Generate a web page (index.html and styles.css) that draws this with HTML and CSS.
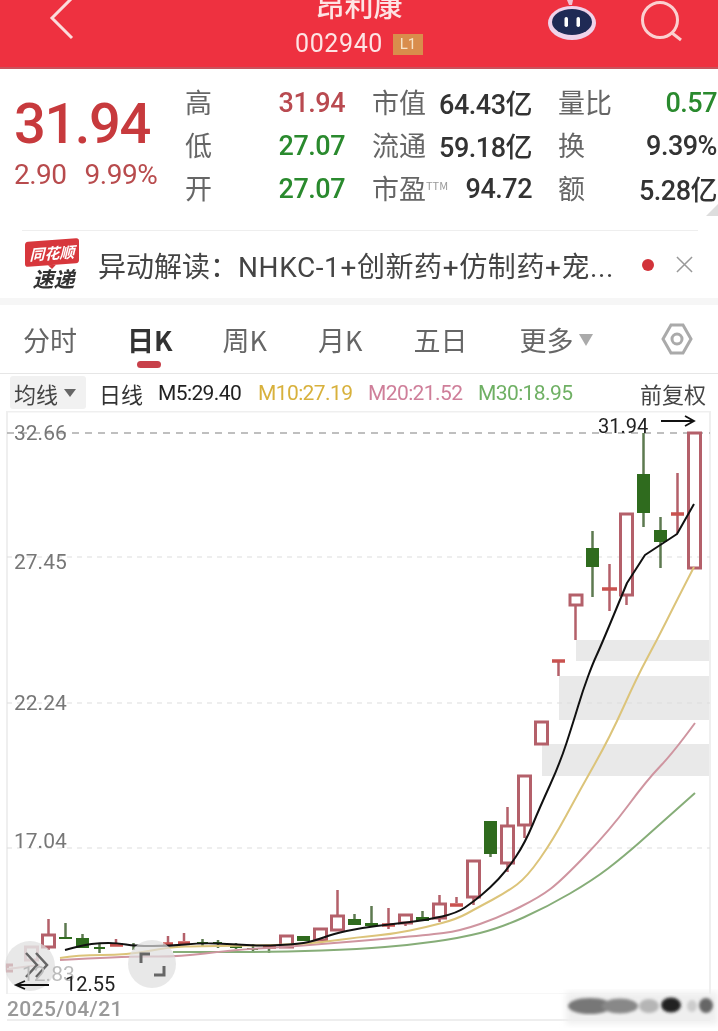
FILE: index.html
```html
<!DOCTYPE html>
<html lang="zh-CN">

<head>
    <meta charset="UTF-8">
    <meta name="viewport" content="width=device-width, initial-scale=1.0">
    <title>昂利康</title>

    <link rel="stylesheet" href="styles.css">
</head>

<body>
    <header class="top-bar">
        <svg class="back-icon" viewBox="0 0 30 50">
            <path d="M23 1 3 21l20 20"></path>
        </svg>
        <div class="stock-name">
            <div class="name">昂利康</div>
            <div class="code-row">
                <span class="code">002940</span>
                <span class="level">L1</span>
            </div>
        </div>
        <svg class="robot-icon" viewBox="0 0 50 42">
            <ellipse cx="25" cy="23" rx="24" ry="17" fill="#efd3ea"></ellipse>
            <ellipse cx="25" cy="22" rx="20" ry="13" fill="#1f2a55"></ellipse>
            <rect x="17.5" y="17" width="3.5" height="10" rx="1.7" fill="#fff"></rect>
            <rect x="29.5" y="17" width="3.5" height="10" rx="1.7" fill="#fff"></rect>
            <path d="M20 0h6l-1 5h-3z" fill="#f0c0d0"></path>
        </svg>
        <svg class="search-icon" viewBox="0 0 44 44">
            <circle cx="20" cy="20" r="17.5"></circle>
            <path d="M32 33l9 7"></path>
        </svg>
    </header>

    <section class="quote">
        <div class="price">
            <div class="last">31.94</div>
            <div class="change"><span>2.90</span><span>9.99%</span></div>
        </div>
        <div class="stats">
            <span class="label">高</span><span class="val red">31.94</span>
            <span class="label">市值</span><span class="val">64.43亿</span>
            <span class="label">量比</span><span class="val green">0.57</span>

            <span class="label">低</span><span class="val green">27.07</span>
            <span class="label">流通</span><span class="val">59.18亿</span>
            <span class="label">换</span><span class="val">9.39%</span>

            <span class="label">开</span><span class="val green">27.07</span>
            <span class="label">市盈<span class="ttm">TTM</span></span><span class="val">94.72</span>
            <span class="label">额</span><span class="val">5.28亿</span>
        </div>
        <div class="corner"></div>
    </section>

    <section class="notice">
        <div class="logo">
            <div class="logo-tag">同花顺</div>
            <div class="logo-sub">速递</div>
        </div>
        <div class="notice-text">异动解读：<span class="notice-body">NHKC-1+创新药+仿制药+宠...</span></div>
        <span class="dot"></span>
        <svg class="close-icon" viewBox="0 0 18 18">
            <path d="M1 1l16 16M17 1 1 17"></path>
        </svg>
    </section>

    <nav class="tabs">
        <span class="tab">分时</span>
        <span class="tab active">日K</span>
        <span class="tab">周K</span>
        <span class="tab">月K</span>
        <span class="tab wide">五日</span>
        <span class="tab more">更多<i class="caret"></i></span>
        <svg class="hex-icon" viewBox="0 0 32 32">
            <path d="M10 2h12l8 14-8 14H10L2 16z"></path>
            <circle cx="16" cy="16" r="5"></circle>
        </svg>
    </nav>

    <div class="ma-row">
        <span class="ma-select">均线<i class="caret small"></i></span>
        <span class="ma-day">日线</span>
        <span class="ma m5">M5:29.40</span>
        <span class="ma m10">M10:27.19</span>
        <span class="ma m20">M20:21.52</span>
        <span class="ma m30">M30:18.95</span>
        <span class="ma-adjust">前复权</span>
    </div>

    <svg class="chart" viewBox="0 411 718 583">
        <rect class="frame" x="7" y="411.5" width="703" height="583"></rect>

        <rect class="band" x="576" y="640" width="133" height="21"></rect>
        <rect class="band" x="559" y="676" width="150" height="44"></rect>
        <rect class="band" x="542" y="744" width="167" height="32"></rect>

        <line class="grid top" x1="7" y1="433" x2="710" y2="433"></line>
        <line class="grid" x1="7" y1="557" x2="710" y2="557"></line>
        <line class="grid" x1="7" y1="703" x2="710" y2="703"></line>
        <line class="grid" x1="7" y1="848" x2="710" y2="848"></line>

        <text class="axis" x="14" y="440">32.66</text>
        <text class="axis" x="14" y="569">27.45</text>
        <text class="axis" x="14" y="710">22.24</text>
        <text class="axis" x="14" y="848">17.04</text>

        <!-- red wicks -->
        <path class="wick-up" d="M575.5 604v36M609.5 564v47M626.5 595v10M677.5 473v60M558.5 661v15M524.5 825v13M507.5 807v19M507.5 863v9M473.5 897v8M456.5 897v6M439.5 895v9M439.5 918v4M405.5 923v3M388.5 908v21M337.5 890v26M48.5 919v16M48.5 947v3M184 933v8M168 936v7M116 939v4"></path>
        <!-- green wicks -->
        <path class="wick-dn" d="M592.5 531v66M643.5 433v94M660.5 517v51M490.5 854v3M422.5 911v6M371.5 906v17M354.5 914v5M65.5 923v15M82.5 934v4M99.5 943v10M133.5 943v7M202.5 939v8M218 940v8M236 943v6M253 944v9M269 948v5"></path>

        <!-- hollow red bodies -->
        <rect class="up" x="570" y="595" width="12" height="10"></rect>
        <rect class="up" x="620.5" y="514" width="12" height="81"></rect>
        <rect class="up" x="688.5" y="433" width="12" height="135"></rect>
        <rect class="up" x="535.5" y="722" width="12" height="22"></rect>
        <rect class="up" x="518.5" y="776" width="12" height="49"></rect>
        <rect class="up" x="501.5" y="826" width="12" height="37"></rect>
        <rect class="up" x="467.5" y="861" width="12" height="36"></rect>
        <rect class="up" x="433.5" y="904" width="12" height="14"></rect>
        <rect class="up" x="399.5" y="915" width="12" height="8"></rect>
        <rect class="up" x="331.5" y="916" width="12" height="14"></rect>
        <rect class="up" x="314.5" y="929" width="12" height="11"></rect>
        <rect class="up" x="280.5" y="936" width="12" height="11"></rect>
        <rect class="up" x="42.5" y="935" width="12" height="12"></rect>

        <!-- flat red bodies -->
        <path class="flat-up" d="M602 589h15M671 514h13M552 661h13M450 905h13M382 925h13M263 947h13M178 943h12M163 944h10M110 945h13"></path>
        <!-- green bodies -->
        <rect class="dn" x="586" y="548" width="13" height="19"></rect>
        <rect class="dn" x="637" y="474" width="13" height="39"></rect>
        <rect class="dn" x="654" y="530" width="13" height="12"></rect>
        <rect class="dn" x="484" y="821" width="13" height="33"></rect>
        <rect class="dn" x="416" y="917" width="13" height="4"></rect>
        <rect class="dn" x="365" y="923" width="13" height="3"></rect>
        <rect class="dn" x="348" y="919" width="13" height="6"></rect>
        <rect class="dn" x="297" y="936" width="13" height="5"></rect>
        <rect class="dn" x="76" y="938" width="13" height="10"></rect>
        <rect class="dn" x="59" y="937" width="13" height="2"></rect>
        <rect class="dn" x="94" y="947" width="11" height="2"></rect>
        <rect class="dn" x="197" y="942" width="11" height="2"></rect>
        <rect class="dn" x="213" y="942" width="9" height="2"></rect>
        <rect class="dn" x="230" y="946" width="12" height="2"></rect>
        <rect class="dn" x="247" y="948" width="11" height="2"></rect>

        <!-- moving averages -->
        <path class="line ma30" d="M173 952H240Q283 952 321.5 950.5Q360 949 385 947Q410 945 435 941.5Q460 938 480 933Q500 928 523.5 917.5Q547 907 570 893.5Q593 880 608 868.5Q623 857 640 842Q657 827 695 793"></path>
        <path class="line ma20" d="M60 960Q127 956 152 956.5Q177 957 205 953.5Q233 950 258 948.5Q283 947 321.5 944Q360 941 393.5 938Q427 935 443.5 933Q460 931 480 924Q500 917 520 907Q540 897 551 888.5Q562 880 586 855Q610 830 628.5 805Q647 780 660 766.5Q673 753 695 723"></path>
        <path class="line ma10" d="M60 958Q77 955 102 955Q127 955 148.5 951Q170 947 185 946.5Q200 946 250 945.5Q300 945 330 941Q360 937 376.5 935.5Q393 934 410 930.5Q427 927 442 923Q457 919 467 913.5Q477 908 492 900Q507 892 517 884.5Q527 877 540 858.5Q553 840 566.5 815Q580 790 595 763.5Q610 737 623.5 707Q637 677 647 658.5Q657 640 667 620Q677 600 694 567"></path>
        <path class="line ma5" d="M65 950Q83 945 91.5 944Q100 943 108.5 943Q117 943 126 944.5Q135 946 152.5 946Q170 946 185 944.5Q200 943 216.5 943.5Q233 944 246.5 945Q260 946 280 945Q300 944 308.5 942Q317 940 325 937Q333 934 346.5 931Q360 928 376.5 926Q393 924 410 922Q427 920 442 916.5Q457 913 465 907.5Q473 902 481.5 895Q490 888 498.5 879Q507 870 516 856.5Q525 843 532.5 825Q540 807 550 785Q560 763 566.5 743Q573 723 578 706.5Q583 690 588 676.5Q593 663 596.5 655.5Q600 648 610 624Q620 600 627 583L645 555 677 534 694 504"></path>

        <!-- faded left side -->
        <rect class="up faded" x="25.5" y="947" width="12" height="13"></rect>
        <path class="up" d="M13 965H7.5v6H13"></path>
        <path class="lead" d="M7 969 40 965"></path>

        <circle class="float-btn" cx="30" cy="966" r="25"></circle>
        <path class="float-icon" d="M26 953l11 12-11 12M36 953l11 12-11 12"></path>
        <circle class="float-btn" cx="152" cy="964" r="24"></circle>
        <path class="float-icon thin" d="M150 954h-9v9M154 975h10v-9"></path>

        <text class="axis pale" x="22" y="981">12.83</text>
        <text class="mark" x="65" y="991">12.55</text>
        <path class="arrow" d="M49 985H16M25 981l-9 4 9 4"></path>
        <text class="mark" x="598" y="433">31.94</text>
        <path class="arrow" d="M661 421h33M685 416l9 5-9 5"></path>
    </svg>

    <footer class="date-row">
        <span class="date">2025/04/21</span>
        <svg class="scribble" viewBox="0 0 160 40">
            <defs>
                <filter id="blur"><feGaussianBlur stdDeviation="1.5"></feGaussianBlur></filter>
                <filter id="soft"><feGaussianBlur stdDeviation="3"></feGaussianBlur></filter>
            </defs>
            <rect x="8" y="3" width="152" height="32" fill="#efefef" filter="url(#soft)"></rect>
            <g filter="url(#blur)">
                <ellipse cx="32" cy="17" rx="22" ry="8" fill="#777"></ellipse>
                <ellipse cx="62" cy="17" rx="18" ry="7.5" fill="#888"></ellipse>
                <ellipse cx="91" cy="17" rx="10" ry="7" fill="#b5b5b5"></ellipse>
                <ellipse cx="113" cy="16" rx="10" ry="7.5" fill="#222"></ellipse>
                <ellipse cx="134" cy="17" rx="5" ry="6" fill="#ccc"></ellipse>
                <ellipse cx="148" cy="16.5" rx="7" ry="7.5" fill="#666"></ellipse>
            </g>
        </svg>
    </footer>
</body>

</html>
```

FILE: styles.css
```css
* {
    box-sizing: border-box;
}

html,
body {
    margin: 0;
    height: 1031px;
    overflow: hidden;
}

body {
    position: relative;
    width: 718px;
    font-family: "Roboto", "Noto Sans CJK SC", sans-serif;
    color: #333;
    background: #fff;
    filter: blur(0.5px);
}

/* top bar */
.top-bar {
    position: relative;
    height: 69px;
    background: #ee3140;
    border-bottom: 2px solid #c9525c;
    overflow: hidden;
}

.back-icon {
    position: absolute;
    left: 49px;
    top: -3px;
    width: 30px;
    height: 50px;
    fill: none;
    stroke: #fbdcdc;
    stroke-width: 3;
}

.stock-name {
    display: flex;
    flex-direction: column;
    align-items: center;
    color: #fde4e4;
}

.name {
    height: 33px;
    margin-top: -12px;
    font-size: 29px;
    line-height: 33px;
    font-weight: 500;
    font-family: "Noto Sans CJK SC", sans-serif;
}

.code-row {
    display: flex;
    align-items: center;
    gap: 10px;
    margin-top: 9px;
}

.code {
    font-size: 25px;
    line-height: 28px;
    letter-spacing: 0.6px;
}

.level {
    width: 30px;
    height: 21px;
    background: #d98d4c;
    color: #f7e3c6;
    font-size: 15px;
    line-height: 21px;
    text-align: center;
}

.robot-icon {
    position: absolute;
    left: 547px;
    top: 0;
    width: 50px;
    height: 42px;
}

.search-icon {
    position: absolute;
    left: 640px;
    top: 0;
    width: 44px;
    height: 44px;
    fill: none;
    stroke: #fbd0d0;
    stroke-width: 3;
}

/* quote */
.quote {
    position: relative;
    display: flex;
    height: 161px;
    padding: 12px 0 0 14px;
}

.price {
    width: 171px;
    flex: none;
    color: #c73a3d;
}

.last {
    margin-top: 9px;
    font-size: 56px;
    line-height: 68px;
    font-weight: 500;
    letter-spacing: -1.4px;
}

.change {
    display: flex;
    gap: 18px;
    margin-top: 0;
    font-size: 28px;
    line-height: 34px;
    letter-spacing: -0.5px;
    color: #b84b4d;
}

.stats {
    display: grid;
    grid-template-columns: 55px 105px 90px 97px 70px 115px;
    grid-auto-rows: 43px;
    margin-top: -1px;
    align-items: center;
    font-size: 27px;
    white-space: nowrap;
}

.label {
    color: #666;
    font-family: "Noto Sans CJK SC", sans-serif;
}

.val {
    padding-top: 2px;
    text-align: right;
    color: #333;
    font-weight: 500;
    letter-spacing: -0.5px;
}

.stats .label:nth-child(6n+3) {
    margin-left: 27px;
}

.stats .label:nth-child(6n+5) {
    margin-left: 26px;
}

.val.red {
    color: #b94a50;
}

.val.green {
    color: #2a8a2e;
}

.ttm {
    font-size: 11px;
    color: #999;
    vertical-align: 9px;
}

.corner {
    position: absolute;
    right: 0;
    top: 135px;
    width: 0;
    height: 0;
    border-left: 12px solid transparent;
    border-bottom: 12px solid #ddd;
}

/* notice */
.notice {
    display: flex;
    align-items: center;
    height: 68px;
    margin: 0 20px 0 22px;
    border-top: 1px solid #eee;
}

.logo {
    width: 60px;
    padding-left: 3px;
    flex: none;
    text-align: center;
}

.logo-tag {
    position: relative;
    width: 54px;
    height: 25px;
    background: #d7373c;
    border-radius: 3px;
    color: #fff;
    font-size: 15px;
    line-height: 25px;
    font-weight: 700;
    font-style: italic;
    font-family: "Noto Sans CJK SC", sans-serif;
    transform: skewY(-4deg);
}

.logo-tag::after {
    content: "";
    position: absolute;
    left: 23px;
    top: 25px;
    border-left: 4px solid transparent;
    border-right: 4px solid transparent;
    border-top: 4px solid #d7373c;
}

.logo-sub {
    margin-top: 1px;
    color: #333;
    font-size: 21px;
    line-height: 24px;
    font-weight: 700;
    font-style: italic;
    font-family: "Noto Sans CJK SC", sans-serif;
}

.notice-text {
    width: 544px;
    margin-left: 16px;
    flex: none;
    font-size: 28px;
    color: #444;
    white-space: nowrap;
}

.notice-body {
    letter-spacing: 0.6px;
}

.dot {
    width: 12px;
    height: 12px;
    flex: none;
    border-radius: 50%;
    background: #d2333a;
}

.close-icon {
    width: 17px;
    height: 17px;
    margin-left: 22px;
    flex: none;
    fill: none;
    stroke: #999;
    stroke-width: 1.6;
}

/* tabs */
.tabs {
    position: relative;
    display: flex;
    align-items: center;
    height: 76px;
    padding: 0 0 0 23px;
    border-top: 7px solid #f6f6f6;
    border-bottom: 1px solid #e6e6e6;
    font-family: "Noto Sans CJK SC", sans-serif;
    font-size: 27px;
    color: #666;
}

.tab {
    width: 95.5px;
    white-space: nowrap;
}

.tab:first-child {
    width: 104px;
}

.tab.wide {
    width: 106px;
}

.tab.active {
    position: relative;
    color: #333;
    font-weight: 700;
}

.tab.active::after {
    content: "";
    position: absolute;
    left: 10px;
    top: 41px;
    width: 24px;
    height: 7px;
    border-radius: 4px;
    background: #c8404a;
}

.caret {
    display: inline-block;
    width: 0;
    height: 0;
    margin-left: 5px;
    vertical-align: 5px;
    border-left: 7px solid transparent;
    border-right: 7px solid transparent;
    border-top: 12px solid #aaa;
}

.caret.small {
    border-left-width: 6px;
    border-right-width: 6px;
    border-top-width: 8px;
    border-top-color: #666;
    vertical-align: 3px;
    margin-left: 6px;
}

.hex-icon {
    width: 32px;
    height: 32px;
    margin-left: 46px;
    fill: none;
    stroke: #aaa;
    stroke-width: 3;
}

/* moving average row */
.ma-row {
    display: flex;
    align-items: center;
    height: 37px;
    padding: 0 12px 0 10px;
    font-size: 21px;
    white-space: nowrap;
}

.ma-select {
    display: flex;
    align-items: center;
    width: 76px;
    height: 33px;
    padding-left: 4px;
    background: #f1f1f1;
    border-radius: 3px;
    color: #444;
    font-size: 22px;
    font-family: "Noto Sans CJK SC", sans-serif;
}

.ma-day {
    width: 59px;
    margin-left: 13px;
    color: #333;
    font-size: 22px;
    font-family: "Noto Sans CJK SC", sans-serif;
}

.ma {
    width: 110px;
    letter-spacing: -0.6px;
}

.ma.m5 {
    width: 100px;
    color: #222;
}

.ma.m10 {
    color: #d8b13c;
}

.ma.m20 {
    color: #cf7f9a;
}

.ma.m30 {
    color: #6fb064;
}

.ma-adjust {
    margin-left: auto;
    color: #444;
    font-size: 22px;
    font-family: "Noto Sans CJK SC", sans-serif;
}

/* chart */
.chart {
    display: block;
    width: 718px;
    height: 583px;
    font-family: "Roboto", sans-serif;
}

.frame {
    fill: none;
    stroke: #efefef;
    stroke-width: 2;
}

.band {
    fill: #e9e9e9;
}

.grid {
    stroke: #ddd;
    stroke-width: 1;
    stroke-dasharray: 5 5;
}

.grid.top {
    stroke: #aaa;
    stroke-width: 1.5;
    stroke-dasharray: 7 6;
}

.axis {
    font-size: 21px;
    fill: #777;
}

.axis.pale {
    fill: #bbb;
}

.mark {
    font-size: 20px;
    fill: #222;
}

.up {
    fill: none;
    stroke: #b4606a;
    stroke-width: 3;
}

.up.faded {
    stroke: #d9b3b8;
}

.flat-up {
    fill: none;
    stroke: #c9524f;
    stroke-width: 3.5;
}

.dn {
    fill: #2f6b1e;
}

.wick-up {
    fill: none;
    stroke: #b4606a;
    stroke-width: 2.5;
}

.wick-dn {
    fill: none;
    stroke: #5d7a50;
    stroke-width: 2.5;
}

.line {
    fill: none;
    stroke-width: 2;
    stroke-linejoin: round;
}

.line.ma5 {
    stroke: #111;
}

.line.ma10 {
    stroke: #dcc47a;
}

.line.ma20 {
    stroke: #cf95a0;
}

.line.ma30 {
    stroke: #86ad78;
}

.lead {
    fill: none;
    stroke: #dbb;
    stroke-width: 2;
}

.float-btn {
    fill: rgba(222, 222, 222, 0.7);
}

.float-icon {
    fill: none;
    stroke: #666;
    stroke-width: 2.5;
}

.float-icon.thin {
    stroke-width: 3;
}

.arrow {
    fill: none;
    stroke: #111;
    stroke-width: 1.8;
}

/* footer */
.date-row {
    position: relative;
    height: 27px;
    margin: 0 8px 0 7px;
    padding-top: 3px;
    border-bottom: 2px solid #eee;
}

.date {
    display: block;
    color: #999;
    font-size: 21px;
    line-height: 24px;
    font-weight: 500;
    letter-spacing: 0.4px;
}

.scribble {
    position: absolute;
    right: -8px;
    top: -5px;
    width: 160px;
    height: 40px;
}
```
